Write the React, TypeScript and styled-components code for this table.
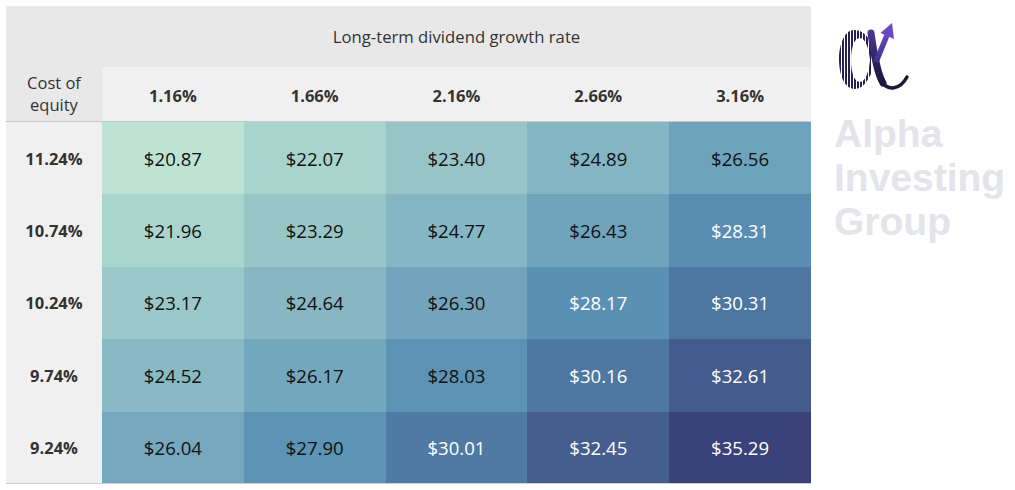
import React from "react";
import styled, { createGlobalStyle } from "styled-components";

const Global = createGlobalStyle`
  html, body { margin: 0; padding: 0; background: #ffffff; }
  body { font-family: "Open Sans", "Noto Sans", sans-serif; }
`;

const Page = styled.div`
  display: flex;
  align-items: flex-start;
  padding: 6px 0 0 6px;
  width: 1015px;
  height: 490px;
  box-sizing: border-box;
`;

const Table = styled.div`
  display: grid;
  width: 805px;
  grid-template-columns: 96px repeat(5, 1fr);
  grid-template-rows: 61px 55px repeat(5, 72.4px);
  flex-shrink: 0;
`;

const Corner = styled.div`
  grid-row: 1 / span 2;
  grid-column: 1;
  background: #e8e8e8;
  border-bottom: 1px solid #c9c9c9;
  display: flex;
  align-items: flex-end;
  justify-content: center;
  padding-bottom: 5px;
  box-sizing: border-box;
  font-size: 16.5px;
  line-height: 22px;
  color: #333333;
  text-align: center;
`;

const Title = styled.div`
  grid-row: 1;
  grid-column: 2 / span 5;
  background: #e8e8e8;
  display: flex;
  align-items: center;
  justify-content: center;
  font-size: 16.7px;
  color: #333333;
  padding-bottom: 1px;
`;

const HeadCell = styled.div`
  background: #f0f0f0;
  border-bottom: 1px solid #c9c9c9;
  box-sizing: border-box;
  display: flex;
  align-items: center;
  justify-content: center;
  font-size: 16.5px;
  font-weight: 700;
  color: #333333;
  padding-top: 2px;
`;

const RowLabel = styled.div<{ $last: boolean }>`
  background: #f0f0f0;
  display: flex;
  align-items: center;
  justify-content: center;
  font-size: 16.5px;
  font-weight: 700;
  color: #333333;
  border-bottom: ${(p) => (p.$last ? "1px solid #d0d0d0" : "none")};
`;

const ValueCell = styled.div<{ $bg: string; $light: boolean; $last: boolean }>`
  background: ${(p) => p.$bg};
  color: ${(p) => (p.$light ? "#ffffff" : "#111111")};
  display: flex;
  align-items: center;
  justify-content: center;
  font-size: 18.6px;
  border-bottom: ${(p) => (p.$last ? "1px solid #d0d0d0" : "none")};
`;

const Side = styled.div`
  display: flex;
  flex-direction: column;
  padding-left: 23px;
  padding-top: 14px;
`;

const LogoMark = styled.svg`
  display: block;
  margin-left: -4px;
`;

const Brand = styled.div`
  margin-top: 12px;
  font-family: "Liberation Sans", Arial, sans-serif;
  font-size: 39px;
  line-height: 44px;
  font-weight: 700;
  color: #e4e4eb;
  white-space: nowrap;
`;

const headers = ["1.16%", "1.66%", "2.16%", "2.66%", "3.16%"];

const rows: [string, number[]][] = [
  ["11.24%", [20.87, 22.07, 23.4, 24.89, 26.56]],
  ["10.74%", [21.96, 23.29, 24.77, 26.43, 28.31]],
  ["10.24%", [23.17, 24.64, 26.3, 28.17, 30.31]],
  ["9.74%", [24.52, 26.17, 28.03, 30.16, 32.61]],
  ["9.24%", [26.04, 27.9, 30.01, 32.45, 35.29]],
];

const stops: [number, [number, number, number]][] = [
  [20.87, [189, 227, 213]],
  [22.07, [168, 212, 205]],
  [23.4, [151, 197, 199]],
  [24.77, [133, 182, 195]],
  [26.43, [112, 164, 189]],
  [28.17, [90, 144, 179]],
  [30.16, [78, 120, 162]],
  [32.45, [69, 94, 142]],
  [35.29, [59, 65, 121]],
];

function colorFor(v: number): string {
  let i = 0;
  while (i < stops.length - 2 && v > stops[i + 1][0]) i++;
  const [a, ca] = stops[i];
  const [b, cb] = stops[i + 1];
  const t = Math.max(0, Math.min(1, (v - a) / (b - a)));
  const c = ca.map((x, k) => Math.round(x + (cb[k] - x) * t));
  return `rgb(${c[0]}, ${c[1]}, ${c[2]})`;
}

const Logo = () => (
  <LogoMark width="80" height="80" viewBox="0 0 80 80">
    <defs>
      <pattern id="stripes" width="3" height="4" patternUnits="userSpaceOnUse">
        <rect width="3" height="4" fill="#24204f" />
        <rect x="2" width="1" height="4" fill="#ffffff" />
      </pattern>
      <linearGradient id="band" x1="0" y1="0" x2="0" y2="1">
        <stop offset="0" stopColor="#4b3596" />
        <stop offset="0.6" stopColor="#2b2258" />
        <stop offset="1" stopColor="#1b1838" />
      </linearGradient>
      <linearGradient id="arrow" x1="0" y1="1" x2="0" y2="0">
        <stop offset="0" stopColor="#3f2f86" />
        <stop offset="1" stopColor="#6a48c0" />
      </linearGradient>
      <clipPath id="bowlClip">
        <rect x="0" y="0" width="44" height="80" />
      </clipPath>
    </defs>
    <g clipPath="url(#bowlClip)">
      <path
        fillRule="evenodd"
        fill="url(#stripes)"
        d="M24 10 C 14 10, 9 26, 9 39 C 9 54, 14 69, 25 69 C 33 69, 38 60, 42 52 L 42 24 C 38 16, 32 10, 24 10 Z M 30 18 C 24 18, 21 28, 21 40 C 21 52, 24 62, 30 62 C 35 62, 39 52, 40 40 C 39 28, 35 18, 30 18 Z"
      />
    </g>
    <path
      d="M41 13 C 44 34, 47 53, 53 63"
      stroke="url(#band)"
      strokeWidth="7"
      fill="none"
      strokeLinecap="round"
    />
    <path
      d="M52 62 C 58 71, 70 70, 77 57"
      stroke="#1b1838"
      strokeWidth="3.5"
      fill="none"
      strokeLinecap="round"
    />
    <path d="M46 42 L 57.5 14" stroke="url(#arrow)" strokeWidth="5.5" fill="none" />
    <path d="M62 3 L 50.5 13 L 64 19 Z" fill="#6a48c0" />
  </LogoMark>
);

export default function App() {
  return (
    <>
      <Global />
      <Page>
        <Table>
          <Corner>
            Cost of
            <br />
            equity
          </Corner>
          <Title>Long-term dividend growth rate</Title>
          {headers.map((h) => (
            <HeadCell key={h}>{h}</HeadCell>
          ))}
          {rows.map(([label, vals], ri) => {
            const last = ri === rows.length - 1;
            return (
              <React.Fragment key={label}>
                <RowLabel $last={last}>{label}</RowLabel>
                {vals.map((v) => (
                  <ValueCell key={v} $bg={colorFor(v)} $light={v >= 28.1} $last={last}>
                    ${v.toFixed(2)}
                  </ValueCell>
                ))}
              </React.Fragment>
            );
          })}
        </Table>
        <Side>
          <Logo />
          <Brand>
            Alpha
            <br />
            Investing
            <br />
            Group
          </Brand>
        </Side>
      </Page>
    </>
  );
}
